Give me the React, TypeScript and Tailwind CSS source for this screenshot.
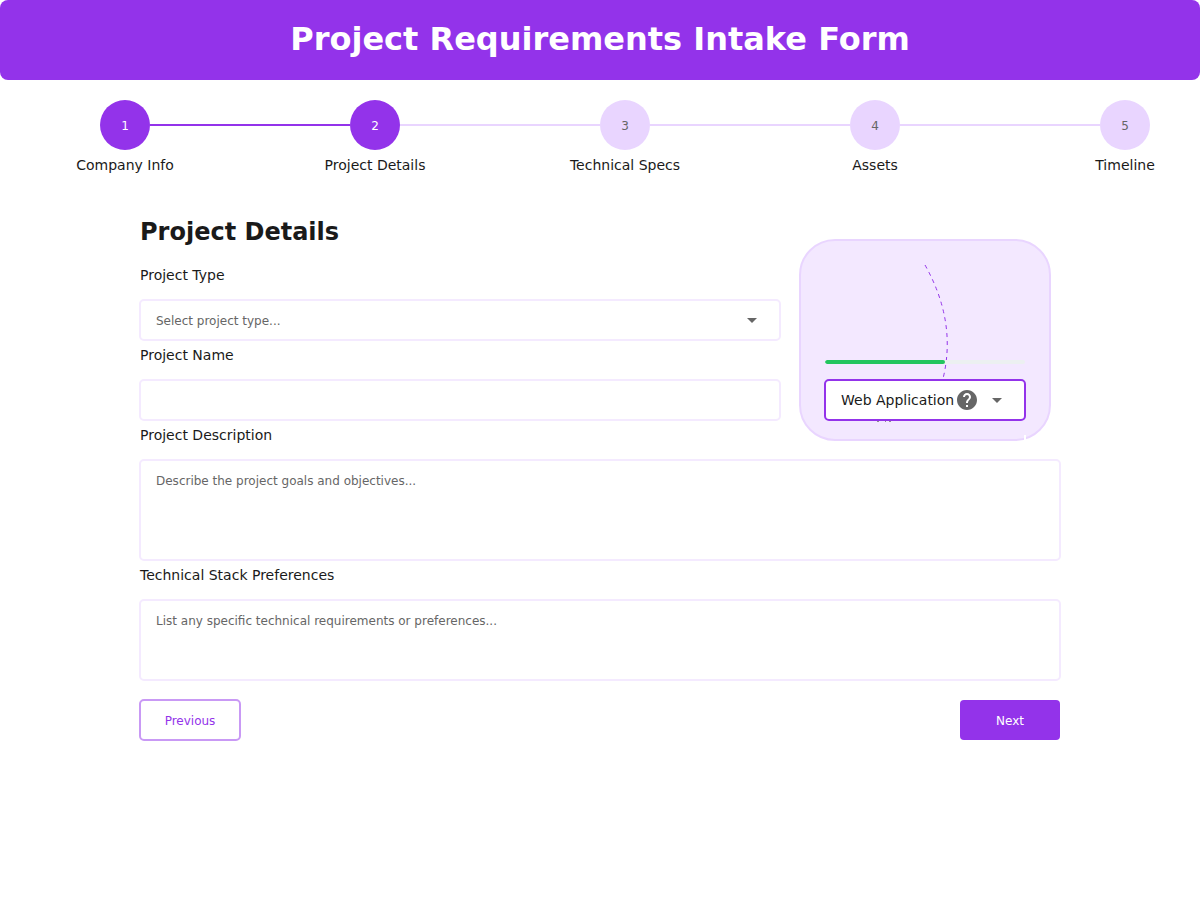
import React from "react";

const steps = ["Company Info", "Project Details", "Technical Specs", "Assets", "Timeline"];
const CURRENT = 2;

const field = "block w-full rounded-[5px] border-2 border-[#f4eaff] bg-white px-[15px] text-[12px] leading-5 text-[#1a1a1a] placeholder:text-[#666666] placeholder:opacity-100";

function Caret() {
  return (
    <svg viewBox="0 0 10 5" className="h-[5px] w-[10px]" aria-hidden="true">
      <path d="M0 0h10L5 5z" fill="#666666" />
    </svg>
  );
}

function Stepper() {
  return (
    <ol className="grid grid-cols-[repeat(4,1fr)_50px] pr-[50px] pl-[100px]">
      {steps.map((name, i) => {
        const reached = i + 1 <= CURRENT;
        return (
          <li key={name} className="flex flex-col">
            <div className="flex items-center">
              <span
                className={
                  "flex size-[50px] shrink-0 items-center justify-center rounded-full pt-[2px] text-[12px] " +
                  (reached ? "bg-[#9333ea] text-white" : "bg-[#e9d5ff] text-[#666666]")
                }
              >
                {i + 1}
              </span>
              {i < steps.length - 1 && (
                <span className={"h-[2px] grow " + (i + 1 < CURRENT ? "bg-[#9333ea]" : "bg-[#e9d5ff]")} />
              )}
            </div>
            <span className="mt-[5px] flex w-[50px] justify-center text-[14px] leading-5 whitespace-nowrap">{name}</span>
          </li>
        );
      })}
    </ol>
  );
}

function PreviewCard() {
  return (
    <aside className="relative flex h-[202px] w-[252px] shrink-0 flex-col justify-end rounded-[36px] border-2 border-[#e9d5ff] bg-[#f3e8ff] px-[23px] pb-[18px]">
      <svg className="absolute -top-[2px] -left-[2px]" width="252" height="202" viewBox="799 239 252 202" fill="none" aria-hidden="true">
        <path d="M925 265Q956.5 321 943.4 377" stroke="#9333ea" strokeDasharray="4 4" />
        <path d="M877 421.5h2M885 421.5h1M889 421.5h2" stroke="#666666" strokeOpacity="0.7" />
        <path d="M1025 435v5" stroke="#ffffff" strokeWidth="2" />
      </svg>
      <div className="relative mx-[1px] mb-[15px] h-1 overflow-hidden rounded-full bg-[#ecf0f1]">
        <div className="h-1 w-3/5 rounded-full bg-[#22c55e]" />
      </div>
      <div className="relative">
        <select
          aria-label="Selected project type"
          className="block h-[42px] w-full appearance-none rounded-[5px] border-2 border-[#9333ea] bg-white pl-[15px] text-[14px] text-[#1a1a1a]"
        >
          <option>Web Application</option>
        </select>
        <div className="pointer-events-none absolute inset-y-0 right-6 flex items-center gap-[15px]">
          <svg viewBox="2 2 20 20" className="size-5" aria-hidden="true">
            <path
              fill="#666666"
              d="M12 2C6.48 2 2 6.48 2 12s4.48 10 10 10 10-4.48 10-10S17.52 2 12 2zm1 17h-2v-2h2v2zm2.07-7.75l-.9.92C13.45 12.9 13 13.5 13 15h-2v-.5c0-1.1.45-2.1 1.17-2.83l1.24-1.26c.37-.36.59-.86.59-1.41 0-1.1-.9-2-2-2s-2 .9-2 2H8c0-2.21 1.79-4 4-4s4 1.79 4 4c0 .88-.36 1.68-.93 2.25z"
            />
          </svg>
          <Caret />
        </div>
      </div>
    </aside>
  );
}

export default function App() {
  return (
    <div className="font-[Verdana,'DejaVu_Sans',sans-serif] text-[#1a1a1a]">
      <header className="flex h-20 items-center justify-center rounded-lg bg-[#9333ea] pb-[2px]">
        <h1 className="text-[32px] leading-9 font-bold text-white">Project Requirements Intake Form</h1>
      </header>
      <nav aria-label="Progress" className="pt-5">
        <Stepper />
      </nav>
      <main className="mx-auto max-w-[922px] pt-10">
        <form onSubmit={(e) => e.preventDefault()}>
          <div className="flex items-end gap-[18px] pr-[10px]">
            <div className="grow">
              <h2 className="px-[1px] pt-[1px] text-[24px] leading-8 font-bold">Project Details</h2>
              <label htmlFor="type" className="mt-[17px] block px-[1px] text-[14px] leading-5">Project Type</label>
              <div className="relative mt-[14px]">
                <select id="type" className={field + " h-[42px] appearance-none pt-[2px] text-[#666666]"}>
                  <option>Select project type...</option>
                </select>
                <div className="pointer-events-none absolute inset-y-0 right-6 flex items-center">
                  <Caret />
                </div>
              </div>
              <label htmlFor="name" className="mt-1 block px-[1px] text-[14px] leading-5">Project Name</label>
              <input id="name" className={field + " mt-[14px] h-[42px]"} />
            </div>
            <div className="-mb-5">
              <PreviewCard />
            </div>
          </div>
          <label htmlFor="description" className="mt-1 block px-[1px] text-[14px] leading-5">Project Description</label>
          <textarea id="description" placeholder="Describe the project goals and objectives..." className={field + " mt-[14px] h-[102px] resize-none py-[10px]"} />
          <label htmlFor="stack" className="mt-1 block px-[1px] text-[14px] leading-5">Technical Stack Preferences</label>
          <textarea id="stack" placeholder="List any specific technical requirements or preferences..." className={field + " mt-[14px] h-[82px] resize-none py-[10px]"} />
          <div className="mt-[18px] flex items-center justify-between">
            <button type="button" className="h-[42px] w-[102px] rounded-[5px] border-2 border-[#c999f5] bg-white pt-[2px] text-[12px] text-[#9333ea]">Previous</button>
            <button type="submit" className="mr-[1px] h-10 w-[100px] rounded bg-[#9333ea] pt-[2px] text-[12px] text-white">Next</button>
          </div>
        </form>
      </main>
    </div>
  );
}
